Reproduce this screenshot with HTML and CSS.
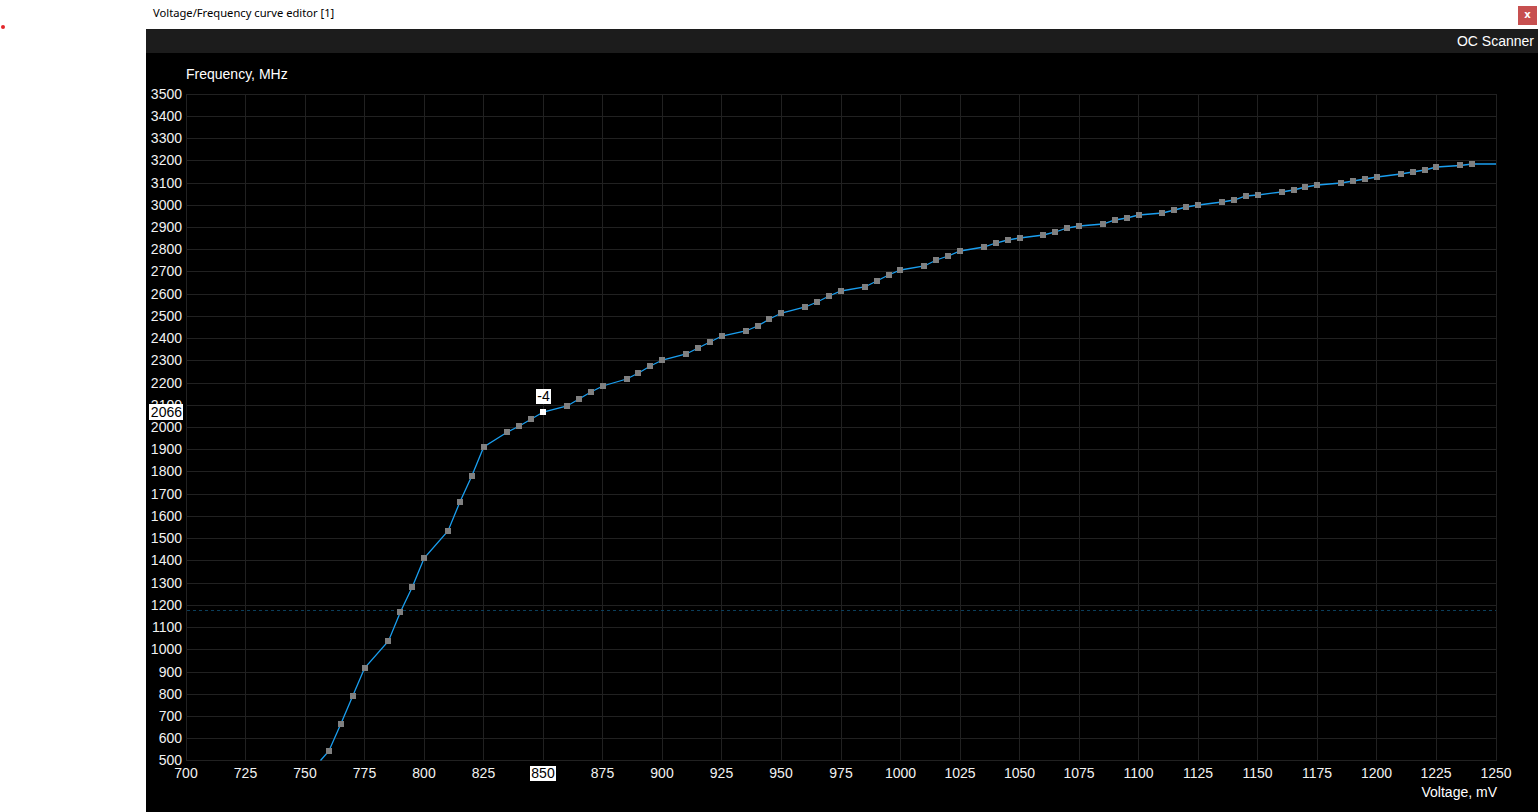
FILE: index.html
```html
<!DOCTYPE html>
<html lang="en">
<head>
<meta charset="utf-8">
<title>Voltage/Frequency curve editor</title>
<link rel="stylesheet" href="styles.css">
</head>
<body>
<div class="app">
  <header class="titlebar">
    <span class="dot"></span>
    <span class="title">Voltage/Frequency curve editor [1]</span>
    <button class="close">x</button>
  </header>
  <main class="editor">
    <div class="toolbar"><span>OC Scanner</span></div>
    <svg class="chart" width="1392" height="759" viewBox="146 53 1392 759" xmlns="http://www.w3.org/2000/svg">
      <g class="grid">
        <line x1="186.5" y1="94" x2="186.5" y2="761"/>
        <line x1="245.5" y1="94" x2="245.5" y2="761"/>
        <line x1="305.5" y1="94" x2="305.5" y2="761"/>
        <line x1="364.5" y1="94" x2="364.5" y2="761"/>
        <line x1="424.5" y1="94" x2="424.5" y2="761"/>
        <line x1="483.5" y1="94" x2="483.5" y2="761"/>
        <line x1="543.5" y1="94" x2="543.5" y2="761"/>
        <line x1="602.5" y1="94" x2="602.5" y2="761"/>
        <line x1="662.5" y1="94" x2="662.5" y2="761"/>
        <line x1="721.5" y1="94" x2="721.5" y2="761"/>
        <line x1="781.5" y1="94" x2="781.5" y2="761"/>
        <line x1="841.5" y1="94" x2="841.5" y2="761"/>
        <line x1="900.5" y1="94" x2="900.5" y2="761"/>
        <line x1="960.5" y1="94" x2="960.5" y2="761"/>
        <line x1="1019.5" y1="94" x2="1019.5" y2="761"/>
        <line x1="1079.5" y1="94" x2="1079.5" y2="761"/>
        <line x1="1138.5" y1="94" x2="1138.5" y2="761"/>
        <line x1="1198.5" y1="94" x2="1198.5" y2="761"/>
        <line x1="1257.5" y1="94" x2="1257.5" y2="761"/>
        <line x1="1317.5" y1="94" x2="1317.5" y2="761"/>
        <line x1="1376.5" y1="94" x2="1376.5" y2="761"/>
        <line x1="1436.5" y1="94" x2="1436.5" y2="761"/>
        <line x1="1496.5" y1="94" x2="1496.5" y2="761"/>
        <line x1="186" y1="94.5" x2="1497" y2="94.5"/>
        <line x1="186" y1="116.5" x2="1497" y2="116.5"/>
        <line x1="186" y1="138.5" x2="1497" y2="138.5"/>
        <line x1="186" y1="160.5" x2="1497" y2="160.5"/>
        <line x1="186" y1="183.5" x2="1497" y2="183.5"/>
        <line x1="186" y1="205.5" x2="1497" y2="205.5"/>
        <line x1="186" y1="227.5" x2="1497" y2="227.5"/>
        <line x1="186" y1="249.5" x2="1497" y2="249.5"/>
        <line x1="186" y1="271.5" x2="1497" y2="271.5"/>
        <line x1="186" y1="294.5" x2="1497" y2="294.5"/>
        <line x1="186" y1="316.5" x2="1497" y2="316.5"/>
        <line x1="186" y1="338.5" x2="1497" y2="338.5"/>
        <line x1="186" y1="360.5" x2="1497" y2="360.5"/>
        <line x1="186" y1="383.5" x2="1497" y2="383.5"/>
        <line x1="186" y1="405.5" x2="1497" y2="405.5"/>
        <line x1="186" y1="427.5" x2="1497" y2="427.5"/>
        <line x1="186" y1="449.5" x2="1497" y2="449.5"/>
        <line x1="186" y1="471.5" x2="1497" y2="471.5"/>
        <line x1="186" y1="494.5" x2="1497" y2="494.5"/>
        <line x1="186" y1="516.5" x2="1497" y2="516.5"/>
        <line x1="186" y1="538.5" x2="1497" y2="538.5"/>
        <line x1="186" y1="560.5" x2="1497" y2="560.5"/>
        <line x1="186" y1="583.5" x2="1497" y2="583.5"/>
        <line x1="186" y1="605.5" x2="1497" y2="605.5"/>
        <line x1="186" y1="627.5" x2="1497" y2="627.5"/>
        <line x1="186" y1="649.5" x2="1497" y2="649.5"/>
        <line x1="186" y1="672.5" x2="1497" y2="672.5"/>
        <line x1="186" y1="694.5" x2="1497" y2="694.5"/>
        <line x1="186" y1="716.5" x2="1497" y2="716.5"/>
        <line x1="186" y1="738.5" x2="1497" y2="738.5"/>
        <line x1="186" y1="760.5" x2="1497" y2="760.5"/>
      </g>
      <line class="limit" x1="187" y1="610.5" x2="1496" y2="610.5"/>

      <g class="ylabels">
        <text x="182" y="99">3500</text>
        <text x="182" y="121">3400</text>
        <text x="182" y="143">3300</text>
        <text x="182" y="165">3200</text>
        <text x="182" y="188">3100</text>
        <text x="182" y="210">3000</text>
        <text x="182" y="232">2900</text>
        <text x="182" y="254">2800</text>
        <text x="182" y="276">2700</text>
        <text x="182" y="299">2600</text>
        <text x="182" y="321">2500</text>
        <text x="182" y="343">2400</text>
        <text x="182" y="365">2300</text>
        <text x="182" y="388">2200</text>
        <text x="182" y="410">2100</text>
        <text x="182" y="432">2000</text>
        <text x="182" y="454">1900</text>
        <text x="182" y="476">1800</text>
        <text x="182" y="499">1700</text>
        <text x="182" y="521">1600</text>
        <text x="182" y="543">1500</text>
        <text x="182" y="565">1400</text>
        <text x="182" y="588">1300</text>
        <text x="182" y="610">1200</text>
        <text x="182" y="632">1100</text>
        <text x="182" y="654">1000</text>
        <text x="182" y="677">900</text>
        <text x="182" y="699">800</text>
        <text x="182" y="721">700</text>
        <text x="182" y="743">600</text>
        <text x="182" y="765">500</text>
      </g>

      <g class="xlabels">
        <text x="186" y="778">700</text>
        <text x="245.5" y="778">725</text>
        <text x="305" y="778">750</text>
        <text x="364.5" y="778">775</text>
        <text x="424" y="778">800</text>
        <text x="483.5" y="778">825</text>
        <text x="602.5" y="778">875</text>
        <text x="662" y="778">900</text>
        <text x="721.5" y="778">925</text>
        <text x="781" y="778">950</text>
        <text x="841" y="778">975</text>
        <text x="900.5" y="778">1000</text>
        <text x="960" y="778">1025</text>
        <text x="1019.5" y="778">1050</text>
        <text x="1079" y="778">1075</text>
        <text x="1138.5" y="778">1100</text>
        <text x="1198" y="778">1125</text>
        <text x="1257.5" y="778">1150</text>
        <text x="1317" y="778">1175</text>
        <text x="1376.5" y="778">1200</text>
        <text x="1436" y="778">1225</text>
        <text x="1496" y="778">1250</text>
      </g>

      <text class="axis-title" x="186" y="79">Frequency, MHz</text>
      <text class="axis-title end" x="1497" y="797">Voltage, mV</text>

      <polyline class="curve" points="320.5,760.5 328.9,751 340.8,724 352.7,696 364.6,668 388.5,641 400.4,612 412.3,587 424.2,558 448,531 459.9,502 471.8,476 483.7,447 507.5,432 519.4,426 531.4,419 543.3,412 567.1,406 579,399 590.9,392 602.8,386 626.6,379 638.5,373 650.4,366 662.4,360 686.2,354 698.1,348 710,342 721.9,336 745.7,331 757.6,326 769.5,319 781.5,313 805.3,307 817.2,302 829.1,296 841,291 864.8,287 876.7,281 888.6,275 900.5,270 924.4,266 936.3,260 948.2,256 960.1,251 983.9,247 995.8,243 1007.7,240 1019.6,238 1043.5,235 1055.4,232 1067.3,228 1079.2,226 1103,224 1114.9,220 1126.8,218 1138.7,215 1162.5,213 1174.5,210 1186.4,207 1198.3,205 1222.1,202 1234,200 1245.9,196 1257.8,195 1281.6,192 1293.6,190 1305.5,187 1317.4,185 1341.2,183 1353.1,181 1365,179 1376.9,177 1400.7,174 1412.6,172 1424.6,170 1436.5,167 1460.3,165.5 1472.2,164 1496,164"/>

      <g class="points">
        <rect x="326" y="748" width="6" height="6"/>
        <rect x="338" y="721" width="6" height="6"/>
        <rect x="350" y="693" width="6" height="6"/>
        <rect x="362" y="665" width="6" height="6"/>
        <rect x="385" y="638" width="6" height="6"/>
        <rect x="397" y="609" width="6" height="6"/>
        <rect x="409" y="584" width="6" height="6"/>
        <rect x="421" y="555" width="6" height="6"/>
        <rect x="445" y="528" width="6" height="6"/>
        <rect x="457" y="499" width="6" height="6"/>
        <rect x="469" y="473" width="6" height="6"/>
        <rect x="481" y="444" width="6" height="6"/>
        <rect x="504" y="429" width="6" height="6"/>
        <rect x="516" y="423" width="6" height="6"/>
        <rect x="528" y="416" width="6" height="6"/>
        <rect x="564" y="403" width="6" height="6"/>
        <rect x="576" y="396" width="6" height="6"/>
        <rect x="588" y="389" width="6" height="6"/>
        <rect x="600" y="383" width="6" height="6"/>
        <rect x="624" y="376" width="6" height="6"/>
        <rect x="635" y="370" width="6" height="6"/>
        <rect x="647" y="363" width="6" height="6"/>
        <rect x="659" y="357" width="6" height="6"/>
        <rect x="683" y="351" width="6" height="6"/>
        <rect x="695" y="345" width="6" height="6"/>
        <rect x="707" y="339" width="6" height="6"/>
        <rect x="719" y="333" width="6" height="6"/>
        <rect x="743" y="328" width="6" height="6"/>
        <rect x="755" y="323" width="6" height="6"/>
        <rect x="766" y="316" width="6" height="6"/>
        <rect x="778" y="310" width="6" height="6"/>
        <rect x="802" y="304" width="6" height="6"/>
        <rect x="814" y="299" width="6" height="6"/>
        <rect x="826" y="293" width="6" height="6"/>
        <rect x="838" y="288" width="6" height="6"/>
        <rect x="862" y="284" width="6" height="6"/>
        <rect x="874" y="278" width="6" height="6"/>
        <rect x="886" y="272" width="6" height="6"/>
        <rect x="897" y="267" width="6" height="6"/>
        <rect x="921" y="263" width="6" height="6"/>
        <rect x="933" y="257" width="6" height="6"/>
        <rect x="945" y="253" width="6" height="6"/>
        <rect x="957" y="248" width="6" height="6"/>
        <rect x="981" y="244" width="6" height="6"/>
        <rect x="993" y="240" width="6" height="6"/>
        <rect x="1005" y="237" width="6" height="6"/>
        <rect x="1017" y="235" width="6" height="6"/>
        <rect x="1040" y="232" width="6" height="6"/>
        <rect x="1052" y="229" width="6" height="6"/>
        <rect x="1064" y="225" width="6" height="6"/>
        <rect x="1076" y="223" width="6" height="6"/>
        <rect x="1100" y="221" width="6" height="6"/>
        <rect x="1112" y="217" width="6" height="6"/>
        <rect x="1124" y="215" width="6" height="6"/>
        <rect x="1136" y="212" width="6" height="6"/>
        <rect x="1159" y="210" width="6" height="6"/>
        <rect x="1171" y="207" width="6" height="6"/>
        <rect x="1183" y="204" width="6" height="6"/>
        <rect x="1195" y="202" width="6" height="6"/>
        <rect x="1219" y="199" width="6" height="6"/>
        <rect x="1231" y="197" width="6" height="6"/>
        <rect x="1243" y="193" width="6" height="6"/>
        <rect x="1255" y="192" width="6" height="6"/>
        <rect x="1279" y="189" width="6" height="6"/>
        <rect x="1291" y="187" width="6" height="6"/>
        <rect x="1302" y="184" width="6" height="6"/>
        <rect x="1314" y="182" width="6" height="6"/>
        <rect x="1338" y="180" width="6" height="6"/>
        <rect x="1350" y="178" width="6" height="6"/>
        <rect x="1362" y="176" width="6" height="6"/>
        <rect x="1374" y="174" width="6" height="6"/>
        <rect x="1398" y="171" width="6" height="6"/>
        <rect x="1410" y="169" width="6" height="6"/>
        <rect x="1422" y="167" width="6" height="6"/>
        <rect x="1433" y="164" width="6" height="6"/>
        <rect x="1457" y="162" width="6" height="6"/>
        <rect x="1469" y="161" width="6" height="6"/>
      </g>
      <rect class="selected" x="540" y="409" width="6" height="6"/>

      <g class="marker">
        <rect x="530" y="766" width="26" height="15"/>
        <text class="center" x="543" y="778">850</text>
        <rect x="149" y="404" width="34" height="16"/>
        <text class="end" x="182" y="417">2066</text>
        <rect x="536" y="389" width="15" height="15"/>
        <text class="center" x="543.5" y="401">-4</text>
      </g>
    </svg>
  </main>
</div>
</body>
</html>
```

FILE: styles.css
```css
html, body {
  margin: 0;
  padding: 0;
}
body {
  background: #ffffff;
  width: 1538px;
  height: 812px;
  overflow: hidden;
}
.app {
  display: flex;
  flex-direction: column;
  height: 812px;
}
.titlebar {
  position: relative;
  height: 29px;
  display: flex;
  align-items: flex-start;
  flex: none;
}
.dot {
  position: absolute;
  left: 1px;
  top: 25px;
  width: 4px;
  height: 4px;
  border-radius: 50%;
  background: #e3262b;
}
.title {
  margin-left: 153px;
  margin-top: 5px;
  font-family: "Noto Sans", "Open Sans", sans-serif;
  font-size: 11.2px;
  line-height: 16px;
  color: #000000;
}
.close {
  margin-left: auto;
  margin-right: 1px;
  margin-top: 6px;
  width: 19px;
  height: 19px;
  padding: 0 0 2px 0;
  border: 0;
  background: #c75050;
  color: #ffffff;
  font-family: "DejaVu Sans", sans-serif;
  font-weight: bold;
  font-size: 10px;
  line-height: 17px;
}
.editor {
  margin-left: 146px;
  flex: 1;
  background: #000000;
  display: flex;
  flex-direction: column;
}
.toolbar {
  height: 24px;
  flex: none;
  background: #1c1c1c;
  display: flex;
  justify-content: flex-end;
  align-items: center;
  padding-right: 4px;
  font-family: "Liberation Sans", Arial, sans-serif;
  font-size: 14px;
  color: #ffffff;
}
.chart {
  display: block;
  flex: none;
}
.grid line {
  stroke: #212121;
  stroke-width: 1;
  shape-rendering: crispEdges;
}
.limit {
  stroke: #0b3f5c;
  stroke-width: 1;
  stroke-dasharray: 3 3;
  shape-rendering: crispEdges;
}
.ylabels text,
.xlabels text,
.axis-title,
.marker text {
  font-family: "Liberation Sans", Arial, sans-serif;
  font-size: 14px;
  fill: #f2f2f2;
}
.ylabels text {
  text-anchor: end;
}
.xlabels text {
  text-anchor: middle;
}
.axis-title {
  fill: #ffffff;
}
.end {
  text-anchor: end;
}
.center {
  text-anchor: middle;
}
.curve {
  fill: none;
  stroke: #1a9ff0;
  stroke-width: 1.3;
}
.points rect {
  fill: #808080;
  shape-rendering: crispEdges;
}
.selected {
  fill: #ffffff;
  shape-rendering: crispEdges;
}
.marker rect {
  fill: #ffffff;
  shape-rendering: crispEdges;
}
.marker text {
  fill: #000000;
}
```
